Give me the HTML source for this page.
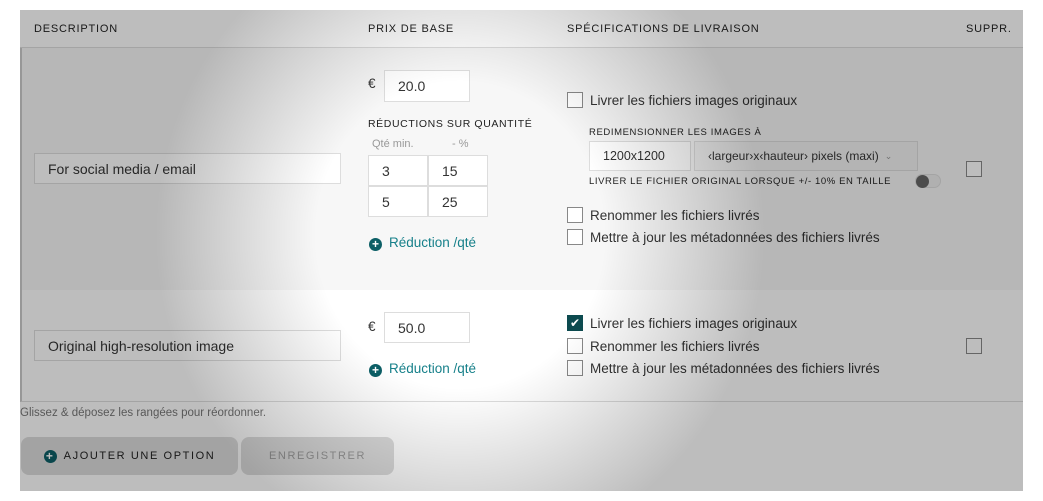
<!DOCTYPE html>
<html><head><meta charset="utf-8"><style>
*{box-sizing:border-box;margin:0;padding:0}
body{width:1043px;height:501px;background:#fff;font-family:"Liberation Sans",sans-serif;color:#333;position:relative;overflow:hidden}
.wrap{position:absolute;left:20px;top:10px;width:1003px;height:481px;background:#fff;overflow:hidden}
.hdr{position:absolute;left:0;top:0;width:1003px;height:38px;border-bottom:1px solid #ddd;font-size:11px;letter-spacing:.8px;color:#222}
.hdr span{position:absolute;top:13px}
.r1{position:absolute;left:0;top:38px;width:1003px;height:242px;background:#f7f7f7;border-left:2px solid #ccc}
.r2{position:absolute;left:0;top:280px;width:1003px;height:112px;background:#fff;border-left:2px solid #ccc;border-bottom:1px solid #ddd}
.inp{position:absolute;border:1px solid #ddd;background:#fff;font-size:14px;padding-left:13px;display:flex;align-items:center;color:#333}
.t{position:absolute;font-size:13.5px;color:#333;white-space:nowrap}
.cb{position:absolute;width:16px;height:16px;border:1px solid #888;background:#fff}
.sm{position:absolute;font-size:9.5px;letter-spacing:.6px;color:#222;white-space:nowrap}
.link{position:absolute;font-size:13.5px;color:#17808a;white-space:nowrap}
.plus{display:inline-block;width:13px;height:13px;border-radius:50%;background:#0c5f66;color:#fff;font-size:12px;line-height:13px;text-align:center;font-weight:bold;vertical-align:-1px;margin-right:7px}
.btn{position:absolute;top:427px;height:38px;border-radius:8px;background:#dcdcdc;font-size:11px;letter-spacing:1.6px;display:flex;align-items:center;justify-content:center}
.ov{position:absolute;left:0;top:0;width:1003px;height:481px;pointer-events:none;background:radial-gradient(ellipse 320px 340px at 440px 225px,rgba(0,0,0,0) 45%,rgba(0,0,0,.26) 95%)}
</style></head><body>
<div class="wrap">
<div class="hdr"><span style="left:14px">DESCRIPTION</span><span style="left:348px">PRIX DE BASE</span><span style="left:547px">SPÉCIFICATIONS DE LIVRAISON</span><span style="left:946px">SUPPR.</span></div>
<div class="r1">
<div class="inp" style="left:12px;top:105px;width:307px;height:31px">For social media / email</div>
<div class="t" style="left:346px;top:28px">€</div>
<div class="inp" style="left:362px;top:22px;width:86px;height:32px">20.0</div>
<div class="sm" style="left:346px;top:70px;font-size:10.5px">RÉDUCTIONS SUR QUANTITÉ</div>
<div class="t" style="left:350px;top:90px;font-size:11px;color:#999">Qté min.</div>
<div class="t" style="left:430px;top:90px;font-size:11px;color:#999">- %</div>
<div class="inp" style="left:346px;top:107px;width:60px;height:31px">3</div>
<div class="inp" style="left:406px;top:107px;width:60px;height:31px">15</div>
<div class="inp" style="left:346px;top:138px;width:60px;height:31px">5</div>
<div class="inp" style="left:406px;top:138px;width:60px;height:31px">25</div>
<div class="link" style="left:347px;top:187px"><span class="plus">+</span>Réduction /qté</div>
<div class="cb" style="left:545px;top:44px"></div><div class="t" style="left:568px;top:45px">Livrer les fichiers images originaux</div>
<div class="sm" style="left:567px;top:79px">REDIMENSIONNER LES IMAGES À</div>
<div class="inp" style="left:567px;top:93px;width:102px;height:30px;font-size:12.5px">1200x1200</div>
<div class="inp" style="left:672px;top:93px;width:224px;height:30px;font-size:12px;background:#f3f3f3">‹largeur›x‹hauteur› pixels (maxi) <span style="color:#999;margin-left:6px;font-size:9px">⌄</span></div>
<div class="sm" style="left:567px;top:128px">LIVRER LE FICHIER ORIGINAL LORSQUE +/- 10% EN TAILLE</div>
<div style="position:absolute;left:893px;top:126px;width:26px;height:14px;border-radius:7px;background:#eee;border:1px solid #ddd"><div style="width:13px;height:13px;border-radius:50%;background:#666;margin-top:0"></div></div>
<div class="cb" style="left:545px;top:159px"></div><div class="t" style="left:568px;top:160px">Renommer les fichiers livrés</div>
<div class="cb" style="left:545px;top:181px"></div><div class="t" style="left:568px;top:182px">Mettre à jour les métadonnées des fichiers livrés</div>
<div class="cb" style="left:944px;top:113px"></div>
</div>
<div class="r2">
<div class="inp" style="left:12px;top:40px;width:307px;height:31px">Original high-resolution image</div>
<div class="t" style="left:346px;top:29px">€</div>
<div class="inp" style="left:362px;top:22px;width:86px;height:31px">50.0</div>
<div class="link" style="left:347px;top:71px"><span class="plus">+</span>Réduction /qté</div>
<div class="cb" style="left:545px;top:25px;background:#0c4a4f;border-color:#0c4a4f;color:#fff;font-size:12px;line-height:14px;text-align:center">✔</div><div class="t" style="left:568px;top:26px">Livrer les fichiers images originaux</div>
<div class="cb" style="left:545px;top:48px"></div><div class="t" style="left:568px;top:49px">Renommer les fichiers livrés</div>
<div class="cb" style="left:545px;top:70px"></div><div class="t" style="left:568px;top:71px">Mettre à jour les métadonnées des fichiers livrés</div>
<div class="cb" style="left:944px;top:48px"></div>
</div>
<div class="t" style="left:0;top:397px;font-size:11.5px;color:#777">Glissez &amp; déposez les rangées pour réordonner.</div>
<div class="btn" style="left:1px;width:217px;color:#222"><span class="plus">+</span>AJOUTER UNE OPTION</div>
<div class="btn" style="left:221px;width:153px;color:#999">ENREGISTRER</div>
<div class="ov"></div>
</div>
</body></html>
